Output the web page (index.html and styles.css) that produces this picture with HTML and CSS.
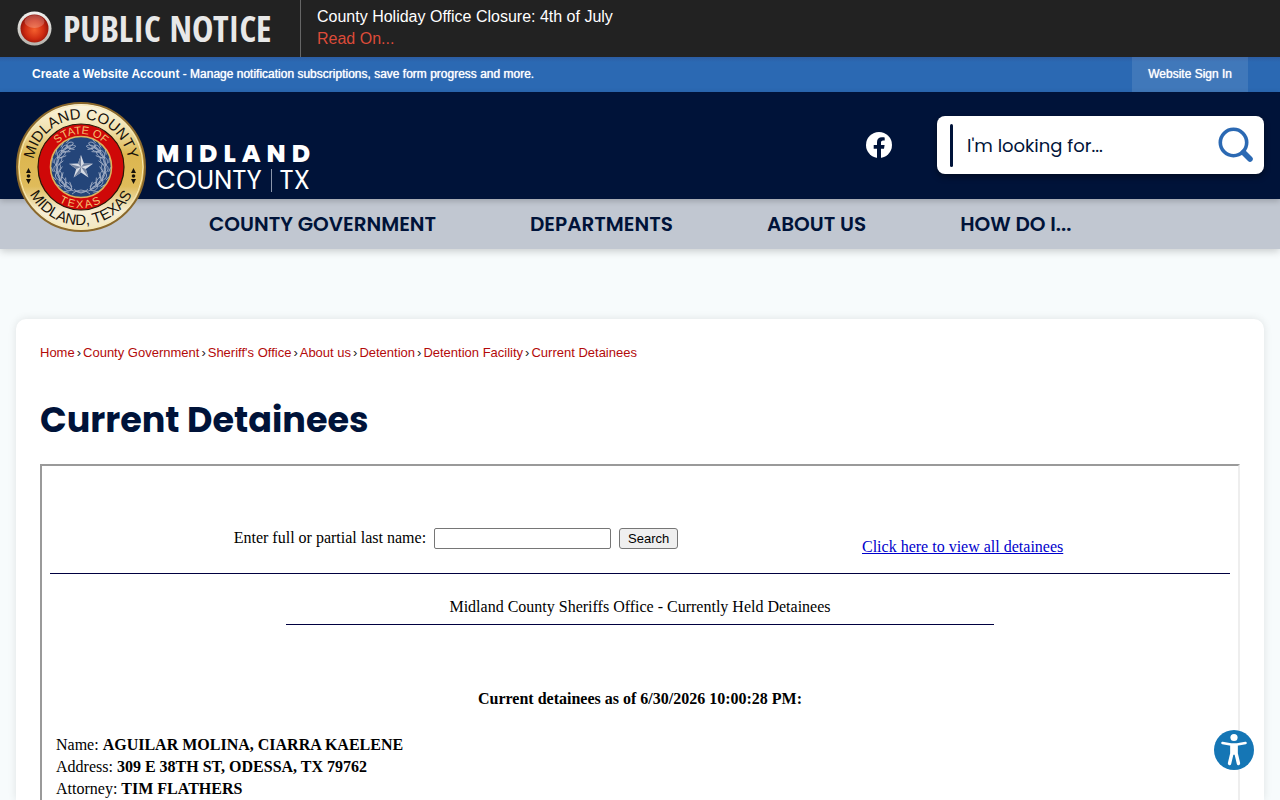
FILE: index.html
```html
<!DOCTYPE html>
<html lang="en">
<head>
    <meta charset="UTF-8">
    <meta name="viewport" content="width=device-width, initial-scale=1.0">
    <title>Current Detainees</title>
    <link rel="stylesheet" href="styles.css">
</head>
<body>
    <div class="notice">
        <div class="notice-title">
            <svg width="36" height="36" viewBox="0 0 36 36" aria-hidden="true">
                <defs>
                    <radialGradient id="lamp" cx="50%" cy="55%" r="55%">
                        <stop offset="0" stop-color="#f4602e"/>
                        <stop offset="0.6" stop-color="#cf2c12"/>
                        <stop offset="1" stop-color="#8f1008"/>
                    </radialGradient>
                    <linearGradient id="rim" x1="0" y1="0" x2="0" y2="1">
                        <stop offset="0" stop-color="#f2f2f0"/>
                        <stop offset="1" stop-color="#b5b3ac"/>
                    </linearGradient>
                </defs>
                <circle cx="17.500" cy="17.500" r="17" fill="url(#rim)"/>
                <circle cx="17.500" cy="17.500" r="14" fill="url(#lamp)"/>
                <ellipse cx="17.500" cy="10.500" rx="10" ry="6.500" fill="#fff" opacity="0.22"/>
            </svg>
            <strong>PUBLIC NOTICE</strong>
        </div>
        <div class="notice-text">
            <span>County Holiday Office Closure: 4th of July</span>
            <a href="#">Read On...</a>
        </div>
    </div>

    <div class="account-bar">
        <p><a href="#">Create a Website Account</a> - Manage notification subscriptions, save form progress and more.</p>
        <a class="sign-in" href="#">Website Sign In</a>
    </div>

    <header class="header">
        <a class="logo" href="#">
            <svg class="seal" width="130" height="130" viewBox="0 0 130 130" role="img" aria-label="County seal">
                <defs>
                    <linearGradient id="gold" x1="0" y1="0" x2="0" y2="1">
                        <stop offset="0" stop-color="#fbf6e4"/>
                        <stop offset="0.2" stop-color="#f1e2b0"/>
                        <stop offset="0.4" stop-color="#dcb64f"/>
                        <stop offset="0.65" stop-color="#dfbb5a"/>
                        <stop offset="0.85" stop-color="#f6efd8"/>
                        <stop offset="1" stop-color="#f3e6bd"/>
                    </linearGradient>
                    <path id="outerTop" d="M17 65 A48 48 0 0 1 113 65"/>
                    <path id="outerBottom" d="M7 65 A58 58 0 0 0 123 65"/>
                    <path id="innerTop" d="M32 65 A33 33 0 0 1 98 65"/>
                    <path id="innerBottom" d="M24 65 A41 41 0 0 0 106 65"/>
                    <g id="leaf">
                        <path d="M0 -25 C3 -28 7 -27 8 -24 C5 -22 2 -23 0 -25Z"/>
                        <path d="M0 -24 C2 -21 5 -19 8 -20 C7 -23 3 -25 0 -24Z"/>
                        <path d="M2 -28 L7 -29 M1 -22 L5 -18"/>
                    </g>
                    <g id="branch">
                        <path d="M65 90 A25 25 0 0 1 50 45"/>
                        <use href="#leaf" transform="translate(65 65) rotate(-158)"/>
                        <use href="#leaf" transform="translate(65 65) rotate(-140)"/>
                        <use href="#leaf" transform="translate(65 65) rotate(-122)"/>
                        <use href="#leaf" transform="translate(65 65) rotate(-104)"/>
                        <use href="#leaf" transform="translate(65 65) rotate(-86)"/>
                        <use href="#leaf" transform="translate(65 65) rotate(-68)"/>
                        <use href="#leaf" transform="translate(65 65) rotate(-50)"/>
                        <use href="#leaf" transform="translate(65 65) rotate(-36)"/>
                    </g>
                </defs>
                <circle cx="65" cy="65" r="64" fill="url(#gold)" stroke="#8a682b" stroke-width="2"/>
                <circle cx="65" cy="65" r="62" fill="none" stroke="#f8e9b4"/>
                <circle cx="65" cy="65" r="43" fill="#cf0808" stroke="#2a1607" stroke-width="1.2"/>
                <circle cx="65" cy="65" r="30.5" fill="#244579" stroke="#dcb35e" stroke-width="1.6"/>
                <g fill="none" stroke="#a9b4c9" stroke-width="0.8">
                    <use href="#branch"/>
                    <use href="#branch" transform="translate(130 0) scale(-1 1)"/>
                    <path d="M56 92 Q65 84 74 92 M58 87 Q65 95 72 87"/>
                </g>
                <path d="M65 53 L68 61.5 L77 61.7 L69.8 67 L72.4 75.5 L65 70.5 L57.6 75.5 L60.2 67 L53 61.7 L62 61.5Z" fill="#d7dce5"/>
                <path d="M65 65 V53 L62 61.5Z M65 65 L77 61.7 L68 61.5Z M65 65 L72.4 75.5 L69.8 67Z M65 65 L57.6 75.5 L65 70.5Z M65 65 L53 61.7 L60.2 67Z" fill="#7786a1"/>
                <g fill="#17120a">
                    <path d="M12.500 66 l-2.500 5 h5Z M12.500 82 l-2.500 -5 h5Z M117.500 66 l-2.500 5 h5Z M117.500 82 l-2.500 -5 h5Z"/>
                    <circle cx="12.500" cy="74" r="1.800"/>
                    <circle cx="117.500" cy="74" r="1.800"/>
                </g>
                <g class="seal-outer">
                    <text><textPath href="#outerTop" startOffset="50%">MIDLAND COUNTY</textPath></text>
                    <text><textPath href="#outerBottom" startOffset="50%">MIDLAND, TEXAS</textPath></text>
                </g>
                <g class="seal-inner">
                    <text><textPath href="#innerTop" startOffset="50%">STATE OF</textPath></text>
                    <text class="seal-state"><textPath href="#innerBottom" startOffset="50%">TEXAS</textPath></text>
                </g>
            </svg>
            <span class="logo-text">
                <strong>MIDLAND</strong>
                <span class="logo-county"><span>COUNTY</span><span class="logo-tx">TX</span></span>
            </span>
        </a>
        <a class="facebook" href="#" aria-label="Facebook">
            <svg width="26" height="26" viewBox="0 0 26 26">
                <circle cx="13" cy="13" r="13" fill="#fff"/>
                <path d="M11 26 V16.800 H7.700 V13 H11 V10.200 C11 6.900 13 5.200 15.900 5.200 C17.300 5.200 18.700 5.400 18.700 5.400 V8.600 H17.100 C15.500 8.600 15 9.600 15 10.600 V13 H18.600 L18 16.800 H15 V26Z" fill="#001339"/>
            </svg>
        </a>
        <form class="site-search" onsubmit="return false">
            <input type="text" placeholder="I'm looking for..." aria-label="Search this site">
            <button aria-label="Search">
                <svg width="36" height="36" viewBox="0 0 36 36" fill="none" stroke="#2b69b3">
                    <circle cx="15.500" cy="15.500" r="13.200" stroke-width="3.600"/>
                    <path d="M25.500 25.500 L32 32" stroke-width="5.600" stroke-linecap="round"/>
                </svg>
            </button>
        </form>
    </header>

    <nav class="main-nav">
        <a href="#">COUNTY GOVERNMENT</a>
        <a href="#">DEPARTMENTS</a>
        <a href="#">ABOUT US</a>
        <a href="#">HOW DO I...</a>
    </nav>

    <main class="card">
        <div class="breadcrumbs">
            <a href="#">Home</a><span>›</span>
            <a href="#">County Government</a><span>›</span>
            <a href="#">Sheriff's Office</a><span>›</span>
            <a href="#">About us</a><span>›</span>
            <a href="#">Detention</a><span>›</span>
            <a href="#">Detention Facility</a><span>›</span>
            <a href="#">Current Detainees</a>
        </div>
        <h1>Current Detainees</h1>

        <section class="frame">
            <div class="lookup">
                <form onsubmit="return false">
                    <label for="lastName">Enter full or partial last name:</label>
                    <input type="text" id="lastName">
                    <button>Search</button>
                </form>
                <a href="#">Click here to view all detainees</a>
            </div>
            <p class="office">Midland County Sheriffs Office - Currently Held Detainees</p>
            <p class="as-of">Current detainees as of 6/30/2026 10:00:28 PM:</p>
            <div class="detainee">
                <div>Name: <b>AGUILAR MOLINA, CIARRA KAELENE</b></div>
                <div>Address: <b>309 E 38TH ST, ODESSA, TX 79762</b></div>
                <div>Attorney: <b>TIM FLATHERS</b></div>
            </div>
        </section>
    </main>

    <button class="accessibility" aria-label="Accessibility options">
        <svg width="40" height="40" viewBox="0 0 40 40">
            <circle cx="20" cy="20" r="20" fill="#1576b5"/>
            <g fill="none" stroke="#fff" stroke-linecap="round" stroke-linejoin="round">
                <path d="M8.500 13 L17 14.500 H23 L31.500 13" stroke-width="2.600"/>
                <path d="M18 16 V23 L15.500 33.500 M22 16 V23 L24.500 33.500" stroke-width="3.400"/>
            </g>
            <path d="M16.500 14 H23.500 V23 L20 25 L16.500 23Z" fill="#fff"/>
            <circle cx="20" cy="7.500" r="3.600" fill="#fff"/>
        </svg>
    </button>
</body>
</html>
```
FILE: styles.css
```css
* {
    box-sizing: border-box;
}
body {
    display: flex;
    flex-direction: column;
    min-height: 100vh;
    margin: 0;
    font-family: "Liberation Sans", Arial, sans-serif;
    background-color: #f7fbfc;
}
a {
    text-decoration: none;
}

/* top bars */
.notice {
    display: flex;
    height: 57px;
    background-color: #222;
    color: #fff;
}
.notice-title {
    display: flex;
    align-items: center;
    gap: 10px;
    width: 301px;
    padding-left: 17px;
    border-right: 1px solid #666;
}
.notice-title strong {
    font-family: "Open Sans Condensed", "Liberation Sans Narrow", sans-serif;
    font-size: 36px;
    color: #e8e8e8;
    white-space: nowrap;
}
.notice-text {
    display: flex;
    flex-direction: column;
    padding: 6px 16px;
    line-height: 22px;
}
.notice-text a {
    color: #dd4b39;
}
.account-bar {
    display: flex;
    justify-content: space-between;
    padding: 0 32px;
    background: linear-gradient(#2c5da3, #2b69b3 5px);
    color: #fff;
    font-size: 12px;
    line-height: 35px;
    text-shadow: 0 0 1px #fff;
}
.account-bar p {
    margin: 0;
}
.account-bar a {
    color: #fff;
}
.account-bar p a {
    font-weight: bold;
    text-shadow: none;
}
.account-bar .sign-in {
    padding: 0 16px;
    background-color: rgba(255, 255, 255, 0.1);
}

/* header */
.header {
    position: relative;
    z-index: 1;
    display: flex;
    align-items: flex-start;
    height: 107px;
    padding: 0 16px;
    background-color: #001339;
    box-shadow: 0 2px 6px rgba(0, 0, 0, 0.2);
    font-family: Poppins, Inter, sans-serif;
}
.logo {
    display: flex;
    align-items: center;
    gap: 10px;
    margin: 10px auto 0 0;
    color: #fff;
}
.seal-outer {
    font: 15px "Liberation Sans", Arial, sans-serif;
    fill: #17120a;
    text-anchor: middle;
}
.seal-inner {
    font: 11px "Liberation Sans", Arial, sans-serif;
    fill: #f3c274;
    text-anchor: middle;
}
.seal-state {
    letter-spacing: 2px;
}
.logo-text {
    display: flex;
    flex-direction: column;
    line-height: 26px;
}
.logo-text strong {
    font-size: 25px;
    font-weight: 800;
    letter-spacing: 6px;
}
.logo-county {
    display: flex;
    align-items: center;
    font-size: 26px;
}
.logo-tx {
    margin-left: 9px;
    padding-left: 8px;
    border-left: 1px solid #8b96ac;
    line-height: 23px;
}
.facebook {
    margin: 40px 45px 0 0;
}
.site-search {
    display: flex;
    align-items: center;
    width: 327px;
    height: 58px;
    margin-top: 24px;
    padding: 0 10px 0 13px;
    border-radius: 8px;
    background-color: #fff;
    box-shadow: 0 3px 6px rgba(0, 0, 0, 0.4);
}
.site-search::before {
    content: "";
    width: 3px;
    height: 43px;
    border-radius: 2px;
    background-color: #001339;
}
.site-search input {
    flex: 1;
    min-width: 0;
    padding: 0 14px;
    border: 0;
    outline: 0;
    background: none;
    font: 18px Poppins, Inter, sans-serif;
}
.site-search input::placeholder {
    color: #001339;
    opacity: 1;
}
.site-search button,
.accessibility {
    padding: 0;
    border: 0;
    background: none;
    cursor: pointer;
}
.site-search svg,
.accessibility svg,
.facebook svg {
    display: block;
}

/* navigation */
.main-nav {
    display: flex;
    gap: 94px;
    padding-left: 209px;
    background-color: #c1c7d1;
    box-shadow: 0 2px 8px rgba(0, 0, 0, 0.2);
    font: 600 20px/50px Poppins, Inter, sans-serif;
}
.main-nav a {
    color: #001339;
}

/* content */
.card {
    flex: 1;
    display: flex;
    flex-direction: column;
    margin: 70px 16px 0;
    padding: 24px 24px 0;
    border-radius: 10px 10px 0 0;
    background-color: #fff;
    box-shadow: 0 0 8px rgba(0, 0, 0, 0.1);
}
.breadcrumbs {
    display: flex;
    gap: 2px;
    font-size: 13px;
    line-height: 20px;
    color: #222;
}
.breadcrumbs a {
    color: #b30a0a;
}
h1 {
    margin: 29px 0 17px;
    font: bold 35px/55px Poppins, Inter, sans-serif;
    color: #001339;
}
.frame {
    flex: 1;
    padding: 0 8px;
    border: 2px solid #eee;
    border-top-color: #9a9a9a;
    border-left-color: #9a9a9a;
    border-bottom: 0;
    font: 16px/22px "Liberation Serif", "Times New Roman", serif;
    color: #000;
}
.lookup {
    display: grid;
    grid-template-columns: 812fr 368fr;
    align-items: end;
    padding: 61px 0 15px;
    border-bottom: 1px solid #000040;
}
.lookup form {
    display: flex;
    justify-content: center;
    align-items: center;
    gap: 8px;
    padding-bottom: 9px;
}
.lookup input {
    width: 177px;
    height: 21px;
    border: 1px solid #767676;
    border-radius: 2px;
}
.lookup button {
    height: 21px;
    padding: 0 8px;
    border: 1px solid #767676;
    border-radius: 3px;
    background-color: #efefef;
    font: 13px "Liberation Sans", Arial, sans-serif;
}
.lookup a {
    color: #0000cc;
    text-decoration: underline;
}
.office {
    width: 60%;
    margin: 22px auto 63px;
    padding-bottom: 6px;
    border-bottom: 1px solid #000040;
    text-align: center;
}
.as-of {
    margin: 0 0 24px;
    font-weight: bold;
    text-align: center;
}
.detainee {
    padding-left: 6px;
}
.accessibility {
    position: fixed;
    right: 26px;
    bottom: 30px;
}
```
